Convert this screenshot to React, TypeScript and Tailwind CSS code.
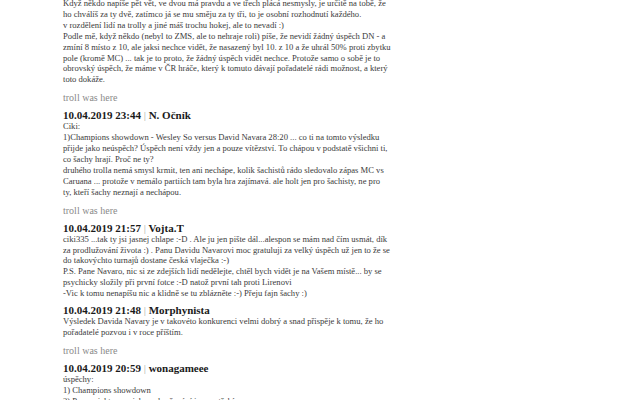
import React from "react";

interface Comment {
  date: string;
  author: string;
  lines: string[];
  troll?: boolean;
}

const intro = [
  "Když někdo napíše pět vět, ve dvou má pravdu a ve třech plácá nesmysly, je určitě na tobě, že",
  "ho chválíš za ty dvě, zatímco já se mu směju za ty tři, to je osobní rozhodnutí každého.",
  "v rozdělení lidí na trolly a jiné máš trochu hokej, ale to nevadí :)",
  "Podle mě, když někdo (nebyl to ZMS, ale to nehraje roli) píše, že nevidí žádný úspěch DN - a",
  "zmíní 8 místo z 10, ale jaksi nechce vidět, že nasazený byl 10. z 10 a že uhrál 50% proti zbytku",
  "pole (kromě MC) ... tak je to proto, že žádný úspěch vidět nechce. Protože samo o sobě je to",
  "obrovský úspěch, že máme v ČR hráče, který k tomuto dávají pořadatelé rádi možnost, a který",
  "toto dokáže.",
];

const comments: Comment[] = [
  {
    date: "10.04.2019 23:44",
    author: "N. Očník",
    troll: true,
    lines: [
      "Ciki:",
      "1)Champions showdown - Wesley So versus David Navara 28:20 ... co ti na tomto výsledku",
      "přijde jako neúspěch? Úspěch není vždy jen a pouze vítězství. To chápou v podstatě všichni ti,",
      "co šachy hrají. Proč ne ty?",
      "druhého trolla nemá smysl krmit, ten ani nechápe, kolik šachistů rádo sledovalo zápas MC vs",
      "Caruana ... protože v nemálo partiích tam byla hra zajímavá. ale holt jen pro šachisty, ne pro",
      "ty, kteří šachy neznají a nechápou.",
    ],
  },
  {
    date: "10.04.2019 21:57",
    author: "Vojta.T",
    lines: [
      "ciki335 ...tak ty jsi jasnej chlape :-D . Ale ju jen pište dál...alespon se mám nad čím usmát, dík",
      "za prodlužování života :) . Panu Davidu Navarovi moc gratuluji za velký úspěch už jen to že se",
      "do takovýchto turnajů dostane česká vlaječka :-)",
      "P.S. Pane Navaro, nic si ze zdejších lidí nedělejte, chtěl bych vidět je na Vašem místě... by se",
      "psychicky složily při první fotce :-D natož první tah proti Lirenovi",
      "-Vic k tomu nenapíšu nic a klidně se tu zblázněte :-) Přeju fajn šachy :)",
    ],
  },
  {
    date: "10.04.2019 21:48",
    author: "Morphynista",
    troll: true,
    lines: [
      "Výsledek Davida Navary je v takovéto konkurenci velmi dobrý a snad přispěje k tomu, že ho",
      "pořadatelé pozvou i v roce příštím.",
    ],
  },
  {
    date: "10.04.2019 20:59",
    author: "wonagameee",
    lines: [
      "úspěchy:",
      "1) Champions showdown",
      "2) Pro projekt a pro jeho pokračování je zapotřebí",
    ],
  },
];

const Troll = () => (
  <div className="mt-[7px] text-[10px] leading-[12px] text-[#8a8a8a]">troll was here</div>
);

const Body = ({ lines }: { lines: string[] }) => (
  <div className="text-[8.6px] leading-[10.9px] text-[#3a3a3a]">
    {lines.map((l, i) => (
      <div key={i} className="whitespace-nowrap">
        {l}
      </div>
    ))}
  </div>
);

export default function App() {
  return (
    <div
      className="w-[640px] h-[400px] overflow-hidden bg-white pl-[63px]"
      style={{ fontFamily: '"Liberation Serif", "DejaVu Serif", serif' }}
    >
      <div className="-mt-[2px]">
        <Body lines={intro} />
        <Troll />
      </div>
      {comments.map((c, i) => (
        <div key={i} className="mt-[5px]">
          <div className="text-[11px] leading-[12px] font-bold text-[#1a1a1a] whitespace-nowrap">
            {c.date} <span className="font-normal text-[#aaa]">|</span> {c.author}
          </div>
          <Body lines={c.lines} />
          {c.troll && <Troll />}
        </div>
      ))}
    </div>
  );
}
